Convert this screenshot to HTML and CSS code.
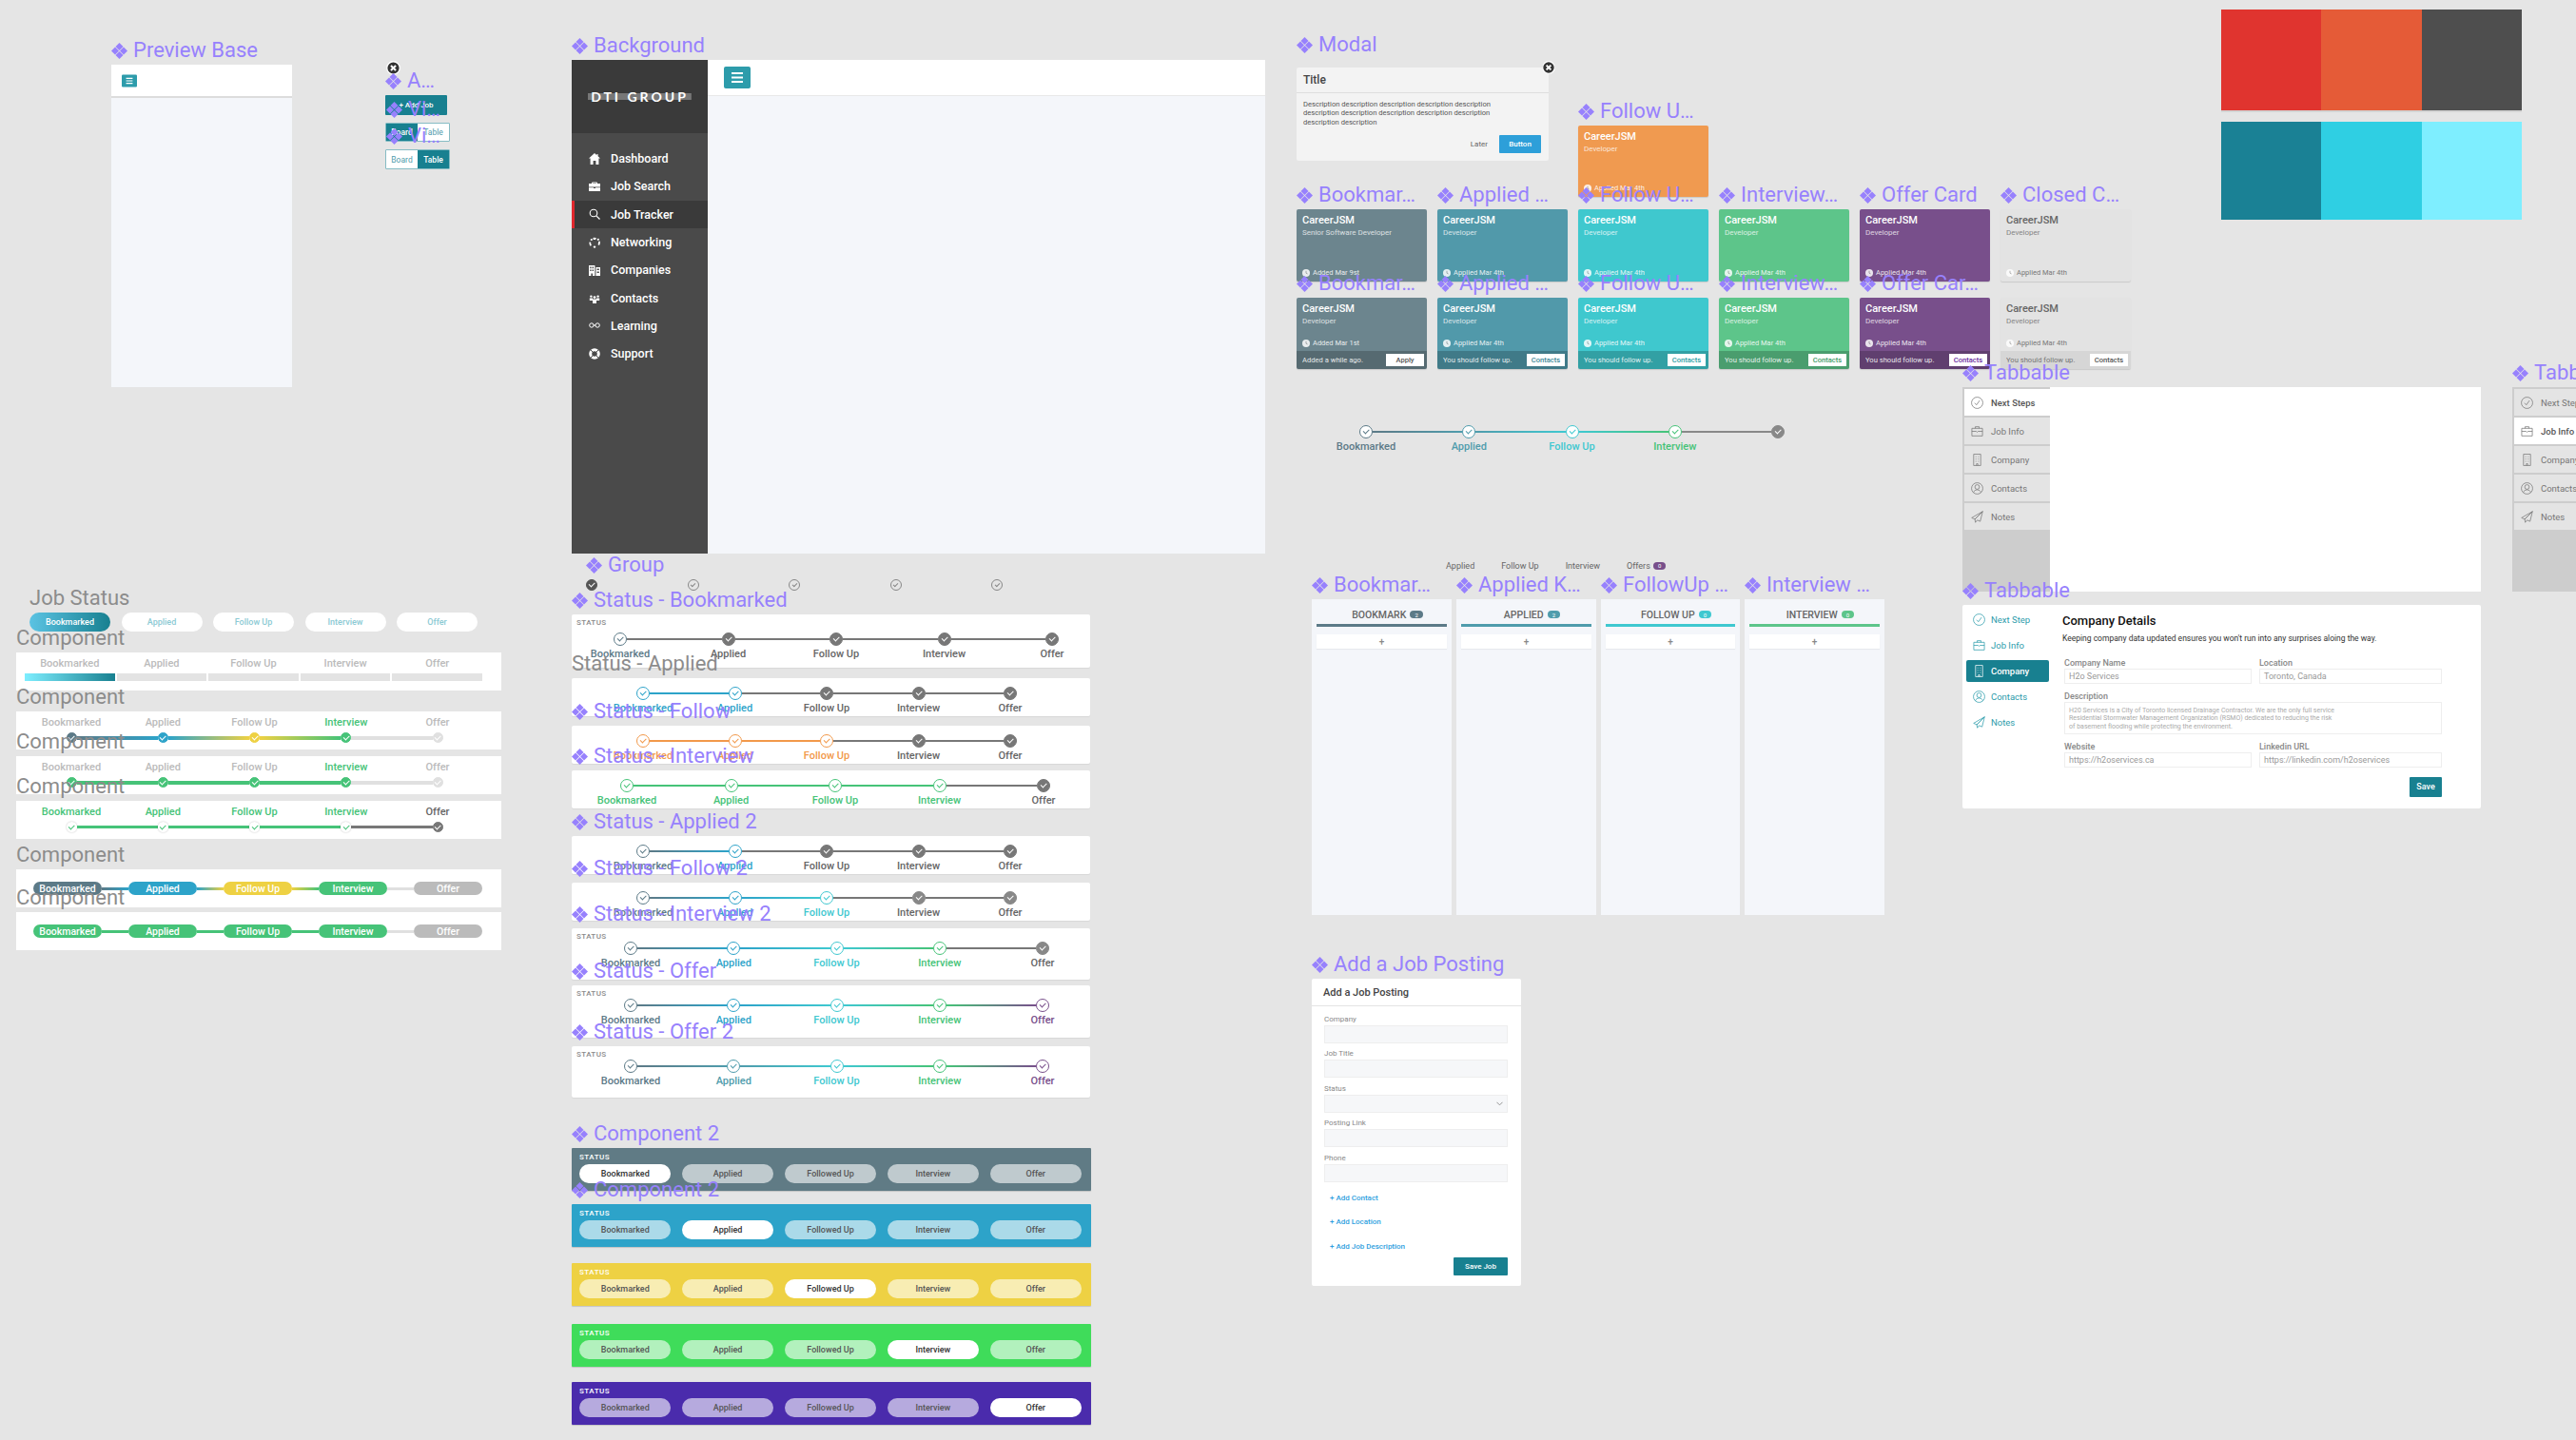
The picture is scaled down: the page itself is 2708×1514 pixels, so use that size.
FILE: index.html
```html
<!DOCTYPE html>
<html lang="en">
<head>
  <meta charset="UTF-8" />
  <title>Job Tracker components</title>
  <link rel="stylesheet" href="styles.css">
</head>
<body>

<svg class="sprite" xmlns="http://www.w3.org/2000/svg">
  <symbol id="i-burger" viewBox="0 0 28 23"><rect width="28" height="23" rx="2" fill="#2d9cab"/><path d="M8 7h12M8 11.5h12M8 16h12" stroke="#fff" stroke-width="2"/></symbol>
  <symbol id="i-x" viewBox="0 0 14 14"><circle cx="7" cy="7" r="6.3" fill="#333" stroke="#fff" stroke-width="1.2"/><path d="M4.6 4.6l4.8 4.8M9.4 4.6l-4.8 4.8" stroke="#fff" stroke-width="1.9"/></symbol>
  <symbol id="i-clock" viewBox="0 0 10 10"><circle cx="5" cy="5" r="5" fill="currentColor"/><path d="M5 2.2v3l2 1" fill="none" stroke="#0006" stroke-width="1"/></symbol>
  <symbol id="i-home" viewBox="0 0 12 12"><path d="M6 0l2.4 2.2V1h1.2v2.3L12 5.6h-1.6V12H7.4V8H4.6v4H1.6V5.6H0z" fill="currentColor"/></symbol>
  <symbol id="i-case" viewBox="0 0 12 12"><path d="M4 1.5h4a1 1 0 0 1 1 1V3h3v3.4H0V3h3v-.5a1 1 0 0 1 1-1zM4.2 2.6V3h3.6v-.4zM0 7.2h5V8h2v-.8h5V11H0z" fill="currentColor"/></symbol>
  <symbol id="i-find" viewBox="0 0 12 12"><circle cx="5" cy="5" r="3.8" fill="none" stroke="currentColor" stroke-width="1.1"/><path d="M7.8 7.8L11.5 11.5" stroke="currentColor" stroke-width="1.2"/></symbol>
  <symbol id="i-net" viewBox="0 0 12 12"><path d="M4.4 1a5 5 0 0 1 3.6.3L7 3.1a3 3 0 0 0-2.2 0zM10 5l1.6-.6A5.5 5.5 0 0 1 11 9l-1.5-1a3.6 3.6 0 0 0 .5-3zM3 8.7l-1.4 1A5.5 5.5 0 0 1 .5 5.5l1.7.3A3.6 3.6 0 0 0 3 8.7z" fill="currentColor"/><circle cx="2.8" cy="3" r="1.1" fill="currentColor"/><circle cx="9.8" cy="2.8" r="1.1" fill="currentColor"/><circle cx="6" cy="10.6" r="1.2" fill="currentColor"/></symbol>
  <symbol id="i-corp" viewBox="0 0 12 12"><path d="M0 1h6.4v11H4V9.5H2.4V12H0zM1.2 2.6v1.6h1.4V2.6zm2.4 0v1.6H5V2.6zM1.2 5.4V7h1.4V5.4zm2.4 0V7H5V5.4zM7.4 3H12v9H7.4zm1.2 1.6v1.5h2.2V4.6zm0 2.8v1.5h2.2V7.4z" fill="currentColor"/></symbol>
  <symbol id="i-team" viewBox="0 0 12 12"><circle cx="2.4" cy="4.6" r="1.2" fill="currentColor"/><circle cx="9.6" cy="4.6" r="1.2" fill="currentColor"/><circle cx="6" cy="5.6" r="1.4" fill="currentColor"/><path d="M.8 6.4h3.2v2.6H.8zM8 6.4h3.2v2.6H8zM4 7.6h4V12H4z" fill="currentColor"/></symbol>
  <symbol id="i-learn" viewBox="0 0 12 12"><circle cx="2.9" cy="6" r="2.2" fill="none" stroke="currentColor"/><circle cx="9.1" cy="6" r="2.2" fill="none" stroke="currentColor"/><path d="M5 6h2" stroke="currentColor"/></symbol>
  <symbol id="i-help" viewBox="0 0 12 12"><circle cx="6" cy="6" r="4.3" fill="none" stroke="currentColor" stroke-width="3"/><path d="M2 2l2 2M10 2L8 4M2 10l2-2M10 10L8 8" stroke="#4a4a4a"/></symbol>
  <symbol id="i-done" viewBox="0 0 14 14"><circle cx="7" cy="7" r="6.4" fill="none" stroke="currentColor" stroke-width=".8"/><path d="M4.2 7.2l2 2.2 3.6-5" fill="none" stroke="currentColor" stroke-width=".8"/></symbol>
  <symbol id="i-job" viewBox="0 0 14 14"><path d="M1 3.6h12v8.6H1zM4.8 3.6V1.8h4.4v1.8M1 7h5l1 1 1-1h5" fill="none" stroke="currentColor" stroke-width=".8"/></symbol>
  <symbol id="i-firm" viewBox="0 0 14 14"><path d="M3 .6h8v12.8H3zM5.6 3v1M8.4 3v1M5.6 5.6v1M8.4 5.6v1M5.6 8.2v1M8.4 8.2v1M6.2 13.4v-2h1.6v2" fill="none" stroke="currentColor" stroke-width=".8"/></symbol>
  <symbol id="i-person" viewBox="0 0 14 14"><circle cx="7" cy="7" r="6.4" fill="none" stroke="currentColor" stroke-width=".8"/><circle cx="7" cy="5.4" r="2.6" fill="none" stroke="currentColor" stroke-width=".8"/><path d="M2.8 11.6c.6-2 2.2-3 4.2-3s3.6 1 4.2 3" fill="none" stroke="currentColor" stroke-width=".8"/></symbol>
  <symbol id="i-send" viewBox="0 0 14 14"><path d="M13.2.8L.8 8l3.6 1.6zM13.2.8L4.4 9.6l.6 3.6 2-2.6 3.4 1.4z" fill="none" stroke="currentColor" stroke-width=".8"/></symbol>
</svg>

<main class="canvas">

  <!-- shells -->
  <section class="frame at-preview shell">
    <div class="label comp">Preview Base</div>
    <header class="preview-top"><svg class="burger-sm"><use href="#i-burger"/></svg></header>
  </section>

  <svg class="frame at-close-a close-icon"><use href="#i-x"/></svg>

  <div class="frame at-addjob add-job">
    <div class="label comp">A…</div>
    + Add Job
  </div>
  <div class="frame at-view-a view-toggle">
    <div class="label comp">Vi…</div>
    <span class="view-on">Board</span><span class="view-off">Table</span>
  </div>
  <div class="frame at-view-b view-toggle">
    <div class="label comp">Vi…</div>
    <span class="view-off">Board</span><span class="view-on">Table</span>
  </div>

  <section class="frame at-bg app">
    <div class="label comp">Background</div>
    <aside class="side">
      <div class="side-logo"><span class="logo-text">DTI GROUP</span></div>
      <nav class="side-nav">
        <a class="side-link"><svg class="side-icon"><use href="#i-home"/></svg>Dashboard</a>
        <a class="side-link"><svg class="side-icon"><use href="#i-case"/></svg>Job Search</a>
        <a class="side-link active"><svg class="side-icon"><use href="#i-find"/></svg>Job Tracker</a>
        <a class="side-link"><svg class="side-icon"><use href="#i-net"/></svg>Networking</a>
        <a class="side-link"><svg class="side-icon"><use href="#i-corp"/></svg>Companies</a>
        <a class="side-link"><svg class="side-icon"><use href="#i-team"/></svg>Contacts</a>
        <a class="side-link"><svg class="side-icon"><use href="#i-learn"/></svg>Learning</a>
        <a class="side-link"><svg class="side-icon"><use href="#i-help"/></svg>Support</a>
      </nav>
    </aside>
    <div class="app-main">
      <header class="app-top"><svg class="burger"><use href="#i-burger"/></svg></header>
    </div>
  </section>

  <div class="frame at-group group-row">
    <div class="label comp">Group</div>
    <i class="node fill c-dark"></i><i class="node ghost"></i><i class="node ghost"></i><i class="node ghost"></i><i class="node ghost"></i>
  </div>

  <!-- status panels -->
  <section class="frame panel at-s1 pad-wide has-head">
    <div class="label comp">Status - Bookmarked</div>
    <div class="panel-head">STATUS</div>
    <div class="track"><i class="node c-slate"></i><i class="seg c-gray"></i><i class="node fill c-gray"></i><i class="seg c-gray"></i><i class="node fill c-gray"></i><i class="seg c-gray"></i><i class="node fill c-gray"></i><i class="seg c-gray"></i><i class="node fill c-gray"></i></div>
    <div class="names"><span class="c-slate">Bookmarked</span><span>Applied</span><span>Follow Up</span><span>Interview</span><span>Offer</span></div>
  </section>

  <section class="frame panel at-s2 pad-narrow">
    <div class="label plain">Status - Applied</div>
    <div class="track"><i class="node c-blue"></i><i class="seg c-blue"></i><i class="node c-blue"></i><i class="seg c-gray"></i><i class="node fill c-gray"></i><i class="seg c-gray"></i><i class="node fill c-gray"></i><i class="seg c-gray"></i><i class="node fill c-gray"></i></div>
    <div class="names"><span class="c-blue">Bookmarked</span><span class="c-blue">Applied</span><span>Follow Up</span><span>Interview</span><span>Offer</span></div>
  </section>

  <section class="frame panel at-s3 pad-narrow">
    <div class="label comp">Status - Follow</div>
    <div class="track"><i class="node c-orange"></i><i class="seg c-orange"></i><i class="node c-orange"></i><i class="seg c-orange"></i><i class="node c-orange"></i><i class="seg c-gray"></i><i class="node fill c-gray"></i><i class="seg c-gray"></i><i class="node fill c-gray"></i></div>
    <div class="names"><span class="c-orange">Bookmarked</span><span class="c-orange">Applied</span><span class="c-orange">Follow Up</span><span>Interview</span><span>Offer</span></div>
  </section>

  <section class="frame panel at-s4 pad-mid">
    <div class="label comp">Status - Interview</div>
    <div class="track"><i class="node c-green"></i><i class="seg c-green"></i><i class="node c-green"></i><i class="seg c-green"></i><i class="node c-green"></i><i class="seg c-green"></i><i class="node c-green"></i><i class="seg c-gray"></i><i class="node fill c-gray"></i></div>
    <div class="names"><span class="c-green">Bookmarked</span><span class="c-green">Applied</span><span class="c-green">Follow Up</span><span class="c-green">Interview</span><span>Offer</span></div>
  </section>

  <section class="frame panel at-s5 pad-narrow">
    <div class="label comp">Status - Applied 2</div>
    <div class="track"><i class="node c-slate"></i><i class="seg g-slate-blue"></i><i class="node c-blue"></i><i class="seg c-gray"></i><i class="node fill c-gray"></i><i class="seg c-gray"></i><i class="node fill c-gray"></i><i class="seg c-gray"></i><i class="node fill c-gray"></i></div>
    <div class="names"><span class="c-slate">Bookmarked</span><span class="c-blue">Applied</span><span>Follow Up</span><span>Interview</span><span>Offer</span></div>
  </section>

  <section class="frame panel at-s6 pad-narrow">
    <div class="label comp">Status - Follow 2</div>
    <div class="track"><i class="node c-slate"></i><i class="seg g-slate-blue"></i><i class="node c-blue"></i><i class="seg g-blue-cyan"></i><i class="node c-cyan"></i><i class="seg c-gray"></i><i class="node fill c-muted"></i><i class="seg c-gray"></i><i class="node fill c-muted"></i></div>
    <div class="names"><span class="c-slate">Bookmarked</span><span class="c-blue">Applied</span><span class="c-cyan">Follow Up</span><span>Interview</span><span>Offer</span></div>
  </section>

  <section class="frame panel at-s7 pad-end has-head">
    <div class="label comp">Status - Interview 2</div>
    <div class="panel-head">STATUS</div>
    <div class="track"><i class="node c-slate"></i><i class="seg g-slate-blue"></i><i class="node c-blue"></i><i class="seg g-blue-cyan"></i><i class="node c-cyan"></i><i class="seg g-cyan-green"></i><i class="node c-green"></i><i class="seg c-gray"></i><i class="node fill c-muted"></i></div>
    <div class="names"><span class="c-slate">Bookmarked</span><span class="c-blue">Applied</span><span class="c-cyan">Follow Up</span><span class="c-green">Interview</span><span>Offer</span></div>
  </section>

  <section class="frame panel at-s8 pad-end has-head">
    <div class="label comp">Status - Offer</div>
    <div class="panel-head">STATUS</div>
    <div class="track"><i class="node c-slate"></i><i class="seg g-slate-blue"></i><i class="node c-blue"></i><i class="seg g-blue-cyan"></i><i class="node c-cyan"></i><i class="seg g-cyan-green"></i><i class="node c-green"></i><i class="seg g-green-purple"></i><i class="node c-purple"></i></div>
    <div class="names"><span class="c-slate">Bookmarked</span><span class="c-blue">Applied</span><span class="c-cyan">Follow Up</span><span class="c-green">Interview</span><span class="c-purple">Offer</span></div>
  </section>

  <section class="frame panel at-s9 pad-end has-head">
    <div class="label comp">Status - Offer 2</div>
    <div class="panel-head">STATUS</div>
    <div class="track"><i class="node c-slate"></i><i class="seg g-slate-teal"></i><i class="node c-teal"></i><i class="seg g-teal-cyan"></i><i class="node c-cyan"></i><i class="seg g-cyan-green"></i><i class="node c-green"></i><i class="seg g-green-purple"></i><i class="node c-purple"></i></div>
    <div class="names"><span class="c-slate">Bookmarked</span><span class="c-teal">Applied</span><span class="c-cyan">Follow Up</span><span class="c-green">Interview</span><span class="c-purple">Offer</span></div>
  </section>

  <!-- status bars -->
  <section class="frame status-bar at-b1 bar-slate">
    <div class="label comp">Component 2</div>
    <div class="bar-title">STATUS</div>
    <div class="bar-pills"><span class="on">Bookmarked</span><span>Applied</span><span>Followed Up</span><span>Interview</span><span>Offer</span></div>
  </section>
  <section class="frame status-bar at-b2 bar-blue">
    <div class="label comp">Component 2</div>
    <div class="bar-title">STATUS</div>
    <div class="bar-pills"><span>Bookmarked</span><span class="on">Applied</span><span>Followed Up</span><span>Interview</span><span>Offer</span></div>
  </section>
  <section class="frame status-bar at-b3 bar-yellow">
    <div class="bar-title">STATUS</div>
    <div class="bar-pills"><span>Bookmarked</span><span>Applied</span><span class="on">Followed Up</span><span>Interview</span><span>Offer</span></div>
  </section>
  <section class="frame status-bar at-b4 bar-green">
    <div class="bar-title">STATUS</div>
    <div class="bar-pills"><span>Bookmarked</span><span>Applied</span><span>Followed Up</span><span class="on">Interview</span><span>Offer</span></div>
  </section>
  <section class="frame status-bar at-b5 bar-violet">
    <div class="bar-title">STATUS</div>
    <div class="bar-pills"><span>Bookmarked</span><span>Applied</span><span>Followed Up</span><span>Interview</span><span class="on">Offer</span></div>
  </section>

  <!-- left column -->
  <div class="frame at-js job-pills">
    <div class="label plain">Job Status</div>
    <span class="on">Bookmarked</span><span>Applied</span><span>Follow Up</span><span>Interview</span><span>Offer</span>
  </div>

  <section class="frame left-panel phases at-l1">
    <div class="label plain">Component</div>
    <div class="phase-names"><span class="c-dark">Bookmarked</span><span>Applied</span><span>Follow Up</span><span>Interview</span><span>Offer</span></div>
    <div class="phase-bars"><i class="first"></i><i></i><i></i><i></i><i></i></div>
  </section>

  <section class="frame left-panel small-steps at-l2">
    <div class="label plain">Component</div>
    <div class="names"><span class="c-soft">Bookmarked</span><span class="c-soft">Applied</span><span class="c-soft">Follow Up</span><span class="c-lgreen">Interview</span><span class="c-soft">Offer</span></div>
    <div class="track"><i class="node fill c-slate"></i><i class="seg g-slate-blue"></i><i class="node fill c-blue"></i><i class="seg g-blue-yellow"></i><i class="node fill c-yellow"></i><i class="seg g-yellow-green"></i><i class="node fill c-lgreen"></i><i class="seg c-pale"></i><i class="node fill c-pale"></i></div>
  </section>

  <section class="frame left-panel small-steps at-l3">
    <div class="label plain">Component</div>
    <div class="names"><span class="c-soft">Bookmarked</span><span class="c-soft">Applied</span><span class="c-soft">Follow Up</span><span class="c-lgreen">Interview</span><span class="c-soft">Offer</span></div>
    <div class="track"><i class="node fill c-lgreen"></i><i class="seg c-lgreen"></i><i class="node fill c-lgreen"></i><i class="seg c-lgreen"></i><i class="node fill c-lgreen"></i><i class="seg c-lgreen"></i><i class="node fill c-lgreen"></i><i class="seg c-pale"></i><i class="node fill c-pale"></i></div>
  </section>

  <section class="frame left-panel small-steps at-l4">
    <div class="label plain">Component</div>
    <div class="names"><span class="c-lgreen">Bookmarked</span><span class="c-lgreen">Applied</span><span class="c-lgreen">Follow Up</span><span class="c-lgreen">Interview</span><span>Offer</span></div>
    <div class="track thin"><i class="node bare c-lgreen"></i><i class="seg c-lgreen"></i><i class="node bare c-lgreen"></i><i class="seg c-lgreen"></i><i class="node bare c-lgreen"></i><i class="seg c-lgreen"></i><i class="node bare c-lgreen"></i><i class="seg c-gray"></i><i class="node fill c-gray"></i></div>
  </section>

  <section class="frame left-panel pill-steps at-l5">
    <div class="label plain">Component</div>
    <div class="pill-track"><span class="p-slate">Bookmarked</span><i class="seg g-slate-blue"></i><span class="p-blue">Applied</span><i class="seg g-blue-yellow"></i><span class="p-yellow">Follow Up</span><i class="seg g-yellow-green"></i><span class="p-green">Interview</span><i class="seg c-pale"></i><span class="p-grey">Offer</span></div>
  </section>

  <section class="frame left-panel pill-steps at-l6">
    <div class="label plain">Component</div>
    <div class="pill-track"><span class="p-green">Bookmarked</span><i class="seg c-lgreen"></i><span class="p-green">Applied</span><i class="seg c-lgreen"></i><span class="p-green">Follow Up</span><i class="seg c-lgreen"></i><span class="p-green">Interview</span><i class="seg c-pale"></i><span class="p-grey">Offer</span></div>
  </section>

  <!-- modal -->
  <section class="frame modal at-modal">
    <div class="label comp">Modal</div>
    <svg class="modal-close"><use href="#i-x"/></svg>
    <div class="modal-head">Title</div>
    <p class="modal-text">Description description description description description<br>description description description description description<br>description description</p>
    <div class="modal-actions"><span class="modal-later">Later</span><span class="modal-btn">Button</span></div>
  </section>

  <!-- job cards -->
  <article class="frame card card-orange at-orange">
    <div class="label comp">Follow U…</div>
    <div class="card-body"><b class="card-title">CareerJSM</b><span class="card-role">Developer</span><span class="card-meta"><svg class="clock"><use href="#i-clock"/></svg>Applied Mar 4th</span></div>
  </article>

  <article class="frame card card-slate col-1 row-a">
    <div class="label comp">Bookmar…</div>
    <div class="card-body"><b class="card-title">CareerJSM</b><span class="card-role">Senior Software Developer</span><span class="card-meta"><svg class="clock"><use href="#i-clock"/></svg>Added Mar 9st</span></div>
  </article>
  <article class="frame card card-teal col-2 row-a">
    <div class="label comp">Applied …</div>
    <div class="card-body"><b class="card-title">CareerJSM</b><span class="card-role">Developer</span><span class="card-meta"><svg class="clock"><use href="#i-clock"/></svg>Applied Mar 4th</span></div>
  </article>
  <article class="frame card card-cyan col-3 row-a">
    <div class="label comp">Follow U…</div>
    <div class="card-body"><b class="card-title">CareerJSM</b><span class="card-role">Developer</span><span class="card-meta"><svg class="clock"><use href="#i-clock"/></svg>Applied Mar 4th</span></div>
  </article>
  <article class="frame card card-green col-4 row-a">
    <div class="label comp">Interview…</div>
    <div class="card-body"><b class="card-title">CareerJSM</b><span class="card-role">Developer</span><span class="card-meta"><svg class="clock"><use href="#i-clock"/></svg>Applied Mar 4th</span></div>
  </article>
  <article class="frame card card-purple col-5 row-a">
    <div class="label comp">Offer Card</div>
    <div class="card-body"><b class="card-title">CareerJSM</b><span class="card-role">Developer</span><span class="card-meta"><svg class="clock"><use href="#i-clock"/></svg>Applied Mar 4th</span></div>
  </article>
  <article class="frame card card-closed col-6 row-a">
    <div class="label comp">Closed C…</div>
    <div class="card-body"><b class="card-title">CareerJSM</b><span class="card-role">Developer</span><span class="card-meta"><svg class="clock"><use href="#i-clock"/></svg>Applied Mar 4th</span></div>
  </article>

  <article class="frame card card-slate col-1 row-b">
    <div class="label comp">Bookmar…</div>
    <div class="card-body"><b class="card-title">CareerJSM</b><span class="card-role">Developer</span><span class="card-meta"><svg class="clock"><use href="#i-clock"/></svg>Added Mar 1st</span></div>
    <div class="card-foot"><span>Added a while ago.</span><span class="card-btn">Apply</span></div>
  </article>
  <article class="frame card card-teal col-2 row-b">
    <div class="label comp">Applied …</div>
    <div class="card-body"><b class="card-title">CareerJSM</b><span class="card-role">Developer</span><span class="card-meta"><svg class="clock"><use href="#i-clock"/></svg>Applied Mar 4th</span></div>
    <div class="card-foot"><span>You should follow up.</span><span class="card-btn">Contacts</span></div>
  </article>
  <article class="frame card card-cyan col-3 row-b">
    <div class="label comp">Follow U…</div>
    <div class="card-body"><b class="card-title">CareerJSM</b><span class="card-role">Developer</span><span class="card-meta"><svg class="clock"><use href="#i-clock"/></svg>Applied Mar 4th</span></div>
    <div class="card-foot"><span>You should follow up.</span><span class="card-btn">Contacts</span></div>
  </article>
  <article class="frame card card-green col-4 row-b">
    <div class="label comp">Interview…</div>
    <div class="card-body"><b class="card-title">CareerJSM</b><span class="card-role">Developer</span><span class="card-meta"><svg class="clock"><use href="#i-clock"/></svg>Applied Mar 4th</span></div>
    <div class="card-foot"><span>You should follow up.</span><span class="card-btn">Contacts</span></div>
  </article>
  <article class="frame card card-purple col-5 row-b">
    <div class="label comp">Offer Car…</div>
    <div class="card-body"><b class="card-title">CareerJSM</b><span class="card-role">Developer</span><span class="card-meta"><svg class="clock"><use href="#i-clock"/></svg>Applied Mar 4th</span></div>
    <div class="card-foot"><span>You should follow up.</span><span class="card-btn">Contacts</span></div>
  </article>
  <article class="frame card card-closed col-6 row-b">
    <div class="card-body"><b class="card-title">CareerJSM</b><span class="card-role">Developer</span><span class="card-meta"><svg class="clock"><use href="#i-clock"/></svg>Applied Mar 4th</span></div>
    <div class="card-foot"><span>You should follow up.</span><span class="card-btn">Contacts</span></div>
  </article>

  <!-- loose stepper and kanban -->
  <div class="frame at-top-steps top-steps">
    <div class="track"><i class="node c-slate"></i><i class="seg g-slate-teal"></i><i class="node c-teal"></i><i class="seg g-teal-cyan"></i><i class="node c-cyan"></i><i class="seg g-cyan-green"></i><i class="node c-green"></i><i class="seg c-muted"></i><i class="node fill c-muted"></i></div>
    <div class="names"><span class="c-slate">Bookmarked</span><span class="c-teal">Applied</span><span class="c-cyan">Follow Up</span><span class="c-green">Interview</span><span></span></div>
  </div>

  <div class="frame at-kan-tabs kan-tabs"><span>Applied</span><span>Follow Up</span><span>Interview</span><span class="kan-offers">Offers <b class="kan-count bg-purple">0</b></span></div>

  <section class="frame kanban kan-1">
    <div class="label comp">Bookmar…</div>
    <div class="kan-head">BOOKMARK <b class="kan-count bg-slate">2</b></div>
    <div class="kan-rule bg-slate"></div>
    <div class="kan-add">+</div>
  </section>
  <section class="frame kanban kan-2">
    <div class="label comp">Applied K…</div>
    <div class="kan-head">APPLIED <b class="kan-count bg-teal">2</b></div>
    <div class="kan-rule bg-teal"></div>
    <div class="kan-add">+</div>
  </section>
  <section class="frame kanban kan-3">
    <div class="label comp">FollowUp …</div>
    <div class="kan-head">FOLLOW UP <b class="kan-count bg-cyan">0</b></div>
    <div class="kan-rule bg-cyan"></div>
    <div class="kan-add">+</div>
  </section>
  <section class="frame kanban kan-4">
    <div class="label comp">Interview …</div>
    <div class="kan-head">INTERVIEW <b class="kan-count bg-green">0</b></div>
    <div class="kan-rule bg-green"></div>
    <div class="kan-add">+</div>
  </section>

  <!-- add job -->
  <section class="frame job-form at-job-form">
    <div class="label comp">Add a Job Posting</div>
    <h3 class="job-title">Add a Job Posting</h3>
    <div class="job-fields">
      <div class="job-field"><span>Company</span><div class="job-input"></div></div>
      <div class="job-field"><span>Job Title</span><div class="job-input"></div></div>
      <div class="job-field"><span>Status</span><div class="job-input select"><svg class="chevron" viewBox="0 0 8 5"><path d="M.5.5L4 4 7.5.5" fill="none" stroke="#888"/></svg></div></div>
      <div class="job-field"><span>Posting Link</span><div class="job-input"></div></div>
      <div class="job-field"><span>Phone</span><div class="job-input"></div></div>
    </div>
    <div class="job-links"><a>+ Add Contact</a><a>+ Add Location</a><a>+ Add Job Description</a></div>
    <div class="job-save">Save Job</div>
  </section>

  <!-- swatches -->
  <div class="frame at-swatches swatches">
    <div class="swatch-row top"><i class="sw-red"></i><i class="sw-orange"></i><i class="sw-dark"></i></div>
    <div class="swatch-row bottom"><i class="sw-teal"></i><i class="sw-cyan"></i><i class="sw-ice"></i></div>
  </div>

  <!-- tabs -->
  <section class="frame tabs at-tab-a">
    <div class="label comp">Tabbable</div>
    <div class="tab-rail">
      <a class="tab on"><svg class="tab-icon"><use href="#i-done"/></svg>Next Steps</a>
      <a class="tab"><svg class="tab-icon"><use href="#i-job"/></svg>Job Info</a>
      <a class="tab"><svg class="tab-icon"><use href="#i-firm"/></svg>Company</a>
      <a class="tab"><svg class="tab-icon"><use href="#i-person"/></svg>Contacts</a>
      <a class="tab"><svg class="tab-icon"><use href="#i-send"/></svg>Notes</a>
    </div>
    <div class="tab-pane"></div>
  </section>

  <section class="frame tabs at-tab-b">
    <div class="label comp">Tabbable</div>
    <div class="tab-rail">
      <a class="tab"><svg class="tab-icon"><use href="#i-done"/></svg>Next Steps</a>
      <a class="tab on"><svg class="tab-icon"><use href="#i-job"/></svg>Job Info</a>
      <a class="tab"><svg class="tab-icon"><use href="#i-firm"/></svg>Company</a>
      <a class="tab"><svg class="tab-icon"><use href="#i-person"/></svg>Contacts</a>
      <a class="tab"><svg class="tab-icon"><use href="#i-send"/></svg>Notes</a>
    </div>
    <div class="tab-pane"></div>
  </section>

  <section class="frame details at-details">
    <div class="label comp">Tabbable</div>
    <nav class="details-nav">
      <a><svg class="tab-icon"><use href="#i-done"/></svg>Next Step</a>
      <a><svg class="tab-icon"><use href="#i-job"/></svg>Job Info</a>
      <a class="on"><svg class="tab-icon"><use href="#i-firm"/></svg>Company</a>
      <a><svg class="tab-icon"><use href="#i-person"/></svg>Contacts</a>
      <a><svg class="tab-icon"><use href="#i-send"/></svg>Notes</a>
    </nav>
    <div class="details-body">
      <h3>Company Details</h3>
      <p>Keeping company data updated ensures you won't run into any surprises aloing the way.</p>
      <div class="details-grid">
        <div class="field"><span>Company Name</span><div class="field-box">H2o Services</div></div>
        <div class="field"><span>Location</span><div class="field-box">Toronto, Canada</div></div>
        <div class="field wide"><span>Description</span><div class="field-box area">H20 Services is a City of Toronto licensed Drainage Contractor. We are the only full service<br>Residential Stormwater Management Organization (RSMO) dedicated to reducing the risk<br>of basement flooding while protecting the environment.</div></div>
        <div class="field"><span>Website</span><div class="field-box">https://h2oservices.ca</div></div>
        <div class="field"><span>Linkedin URL</span><div class="field-box">https://linkedin.com/h2oservices</div></div>
      </div>
      <div class="details-save">Save</div>
    </div>
  </section>

</main>
</body>
</html>
```

FILE: styles.css
```css
:root {
  --slate: #5c7a87;
  --blue: #2da3c9;
  --teal: #4f9cac;
  --cyan: #3fc8d0;
  --green: #46c378;
  --yellow: #eed143;
  --orange: #f2994a;
  --purple: #784f8b;
  --brand: #188090;
  --label: #9781fd;
}

body {
  margin: 0;
  background: #e5e5e5;
  font-family: Roboto, "Liberation Sans", sans-serif;
  color: #666;
}

.sprite {
  display: none;
}

.canvas {
  position: relative;
  width: 2708px;
  height: 1514px;
  overflow: hidden;
}

/* every artboard sits on the free canvas, its name floats above it */
.frame {
  position: absolute;
  box-sizing: border-box;
}

.label {
  position: absolute;
  left: 0;
  bottom: 100%;
  margin-bottom: 2px;
  z-index: 5;
  display: flex;
  align-items: center;
  gap: 6px;
  font-size: 22px;
  font-weight: 400;
  line-height: 26px;
  white-space: nowrap;
  color: var(--label);
}

.label.plain {
  color: #8c8c8c;
}

.label.comp::before {
  content: "";
  flex: none;
  width: 17px;
  height: 17px;
  margin-top: 1px;
  background: var(--label);
  clip-path: path("M8.5 0l4 4-4 4-4-4zM4 4.5l4 4-4 4-4-4zM13 4.5l4 4-4 4-4-4zM8.5 9l4 4-4 4-4-4z");
}

/* canvas positions */
.at-preview { left: 117px; top: 68px; width: 190px; height: 339px; }
.at-close-a { left: 406px; top: 64px; width: 15px; height: 15px; }
.at-addjob { left: 405px; top: 100px; width: 65px; height: 21px; }
.at-view-a { left: 405px; top: 129px; width: 68px; height: 20px; }
.at-view-b { left: 405px; top: 157px; width: 68px; height: 21px; }
.at-bg { left: 601px; top: 63px; width: 729px; height: 519px; }
.at-group { left: 616px; top: 609px; width: 438px; height: 12px; }

.at-s1 { left: 601px; top: 646px; height: 56px; }
.at-s2 { left: 601px; top: 713px; height: 40px; }
.at-s3 { left: 601px; top: 763px; height: 40px; }
.at-s4 { left: 601px; top: 810px; height: 40px; }
.at-s5 { left: 601px; top: 879px; height: 40px; }
.at-s6 { left: 601px; top: 928px; height: 40px; }
.at-s7 { left: 601px; top: 976px; height: 54px; }
.at-s8 { left: 601px; top: 1036px; height: 55px; }
.at-s9 { left: 601px; top: 1100px; height: 54px; }

.at-b1 { top: 1207px; }
.at-b2 { top: 1266px; }
.at-b3 { top: 1328px; }
.at-b4 { top: 1392px; }
.at-b5 { top: 1453px; }

.at-js { left: 31px; top: 644px; width: 471px; height: 20px; }
.at-l1 { top: 686px; }
.at-l2 { top: 748px; }
.at-l3 { top: 795px; }
.at-l4 { top: 842px; }
.at-l5 { top: 914px; }
.at-l6 { top: 959px; }

.at-modal { left: 1363px; top: 71px; width: 265px; height: 98px; }
.at-orange { left: 1659px; top: 132px; height: 75px; }
.at-top-steps { left: 1429px; top: 447px; width: 447px; }
.at-kan-tabs { left: 1520px; top: 589px; }
.at-job-form { left: 1379px; top: 1029px; width: 220px; height: 323px; }
.at-swatches { left: 2335px; top: 10px; width: 316px; height: 221px; }
.at-tab-a { left: 2063px; top: 407px; }
.at-tab-b { left: 2641px; top: 407px; }
.at-details { left: 2063px; top: 636px; width: 545px; height: 214px; }

/* preview + app shell */
.shell {
  background: #f4f6fa;
}

.preview-top {
  height: 35px;
  box-sizing: border-box;
  padding: 10px 11px;
  background: #fff;
  border-bottom: 2px solid #dcdcdc;
}

.burger-sm {
  display: block;
  width: 16px;
  height: 14px;
}

.close-icon {
  overflow: visible;
}

.add-job {
  display: flex;
  align-items: center;
  justify-content: center;
  background: var(--brand);
  border-radius: 1px;
  font-size: 8px;
  font-weight: 500;
  color: #fff;
}

.view-toggle {
  display: flex;
  border: 1px solid #86bcc4;
  border-radius: 1px;
  background: #fff;
  font-size: 8.5px;
}

.view-toggle span {
  flex: 1;
  display: flex;
  align-items: center;
  justify-content: center;
}

.view-on {
  background: var(--brand);
  color: #fff;
  font-weight: 500;
}

.view-off {
  color: #4f9cac;
}

.app {
  display: flex;
}

.side {
  width: 143px;
  background: #4a4a4a;
}

.side-logo {
  height: 77px;
  display: flex;
  align-items: center;
  justify-content: center;
  background: #3a3a3a;
}

.logo-text {
  padding: 0 3px;
  background: linear-gradient(#777, #777) center / 100% 7px no-repeat;
  font-family: Lato, sans-serif;
  font-size: 14px;
  font-weight: 700;
  letter-spacing: 3px;
  color: #fff;
}

.side-nav {
  padding-top: 12px;
}

.side-link {
  display: flex;
  align-items: center;
  gap: 11px;
  height: 29.3px;
  padding-left: 18px;
  font-size: 12.5px;
  font-weight: 500;
  color: #fff;
}

.side-link.active {
  padding-left: 15px;
  border-left: 3px solid #e0282e;
  background: #3a3a3a;
}

.side-icon {
  flex: none;
  width: 12px;
  height: 12px;
  color: #fff;
}

.app-main {
  flex: 1;
  background: #f4f6fa;
}

.app-top {
  height: 38px;
  box-sizing: border-box;
  padding-top: 7px;
  padding-left: 17px;
  background: #fff;
  border-bottom: 1px solid #e8e8e8;
}

.burger {
  display: block;
  width: 28px;
  height: 23px;
}

.group-row {
  display: flex;
  justify-content: space-between;
  --node: 12px;
}

/* status steppers */
.panel {
  width: 545px;
  padding-top: 9px;
  background: #fff;
  border-radius: 2px;
  box-shadow: 0 1px 1px rgba(0, 0, 0, 0.06);
}

.panel.has-head {
  padding-top: 4px;
}

.panel-head {
  height: 10px;
  font-size: 8px;
  font-weight: 500;
  line-height: 10px;
  letter-spacing: 0.4px;
  color: #8a8a8a;
}

.pad-wide { padding-left: 44px; padding-right: 33px; }
.pad-wide .panel-head { margin-left: -39px; margin-bottom: 5px; }
.pad-narrow { padding-left: 68px; padding-right: 77px; }
.pad-mid { padding-left: 51px; padding-right: 42px; }
.pad-end { padding-left: 55px; padding-right: 43px; }
.pad-end .panel-head { margin-left: -50px; }

.track {
  display: flex;
  align-items: center;
}

.seg {
  flex: 1;
  height: 2.5px;
  background: currentColor;
}

.node {
  flex: none;
  display: flex;
  align-items: center;
  justify-content: center;
  box-sizing: border-box;
  width: var(--node, 14px);
  height: var(--node, 14px);
  border: 1.5px solid currentColor;
  border-radius: 50%;
  background: #fff;
}

.node::after {
  content: "";
  width: 5px;
  height: 2.5px;
  border: solid currentColor;
  border-width: 0 0 1.5px 1.5px;
  transform: translateY(-1px) rotate(-45deg);
}

.node.fill {
  background: currentColor;
}

.node.fill::after {
  border-color: #fff;
}

.node.ghost {
  border: 1px solid #888;
  background: transparent;
  color: #888;
}

.node.ghost::after {
  width: 4px;
  height: 2px;
  border-width: 0 0 1px 1px;
}

.node.bare {
  border: 0;
  box-shadow: 0 0 2px rgba(0, 0, 0, 0.25);
}

.names {
  display: flex;
  justify-content: space-between;
  margin-top: 2px;
  font-size: 11px;
  font-weight: 500;
  line-height: 14px;
}

.names span {
  display: flex;
  justify-content: center;
  width: var(--node, 14px);
  white-space: nowrap;
}

.c-slate { color: var(--slate); }
.c-blue { color: var(--blue); }
.c-teal { color: var(--teal); }
.c-cyan { color: var(--cyan); }
.c-green { color: var(--green); }
.c-lgreen { color: #46c378; }
.c-orange { color: var(--orange); }
.c-purple { color: var(--purple); }
.c-yellow { color: var(--yellow); }
.c-gray { color: #777; }
.c-muted { color: #888; }
.c-dark { color: #555; }
.c-soft { color: #bbb; }
.c-pale { color: #e0e0e0; }

.g-slate-blue { background: linear-gradient(90deg, var(--slate), var(--blue)); }
.g-slate-teal { background: linear-gradient(90deg, var(--slate), var(--teal)); }
.g-blue-cyan { background: linear-gradient(90deg, var(--blue), var(--cyan)); }
.g-teal-cyan { background: linear-gradient(90deg, var(--teal), var(--cyan)); }
.g-cyan-green { background: linear-gradient(90deg, var(--cyan), var(--green)); }
.g-green-purple { background: linear-gradient(90deg, var(--green), var(--purple)); }
.g-blue-yellow { background: linear-gradient(90deg, var(--blue), var(--yellow)); }
.g-yellow-green { background: linear-gradient(90deg, var(--yellow), var(--green)); }

/* coloured status bars */
.status-bar {
  left: 601px;
  width: 546px;
  height: 45px;
  padding: 5px 10px 0 8px;
  border-radius: 1px;
  box-shadow: 0 1px 1px rgba(0, 0, 0, 0.15);
}

.bar-slate { background: #607b85; }
.bar-blue { background: var(--blue); }
.bar-yellow { background: var(--yellow); }
.bar-green { background: #3fdc5a; }
.bar-violet { background: #4a2bac; }

.bar-title {
  height: 12px;
  font-size: 8px;
  font-weight: 500;
  line-height: 10px;
  letter-spacing: 0.5px;
  color: #fff;
}

.bar-pills {
  display: flex;
  gap: 11.4px;
}

.bar-pills span {
  flex: 1;
  display: flex;
  align-items: center;
  justify-content: center;
  height: 20px;
  border-radius: 10px;
  background: rgba(255, 255, 255, 0.6);
  font-size: 9px;
  font-weight: 500;
  color: #555;
}

.bar-pills .on {
  background: #fff;
  color: #333;
}

/* left column */
.job-pills {
  display: flex;
  justify-content: space-between;
}

.job-pills span {
  display: flex;
  align-items: center;
  justify-content: center;
  width: 85px;
  border-radius: 10px;
  background: #fff;
  font-size: 9px;
  font-weight: 500;
  color: #8ccad4;
}

.job-pills .on {
  background: linear-gradient(90deg, #5bc3e3, var(--brand));
  color: #fff;
}

.left-panel {
  left: 17px;
  width: 510px;
  height: 40px;
  padding: 5px 61.5px 0 52.5px;
  background: #fff;
}

.left-panel.phases {
  padding: 5px 20px 0 9px;
}

.phase-names,
.phase-bars {
  display: grid;
  grid-template-columns: repeat(5, 1fr);
  column-gap: 2px;
}

.phase-names span {
  font-size: 11px;
  font-weight: 500;
  line-height: 14px;
  text-align: center;
  color: #bbb;
}

.phase-bars {
  margin-top: 3px;
}

.phase-bars i {
  height: 8px;
  background: #e3e3e3;
}

.phase-bars .first {
  background: linear-gradient(90deg, #7eeeff, var(--brand));
}

.small-steps {
  --node: 11px;
}

.small-steps .names {
  margin-top: 0;
  margin-bottom: 3px;
}

.small-steps .seg {
  height: 4px;
}

.small-steps .thin .seg {
  height: 2.5px;
}

.left-panel.pill-steps {
  padding: 13px 20px 0 18px;
}

.pill-track {
  display: flex;
  align-items: center;
}

.pill-track span {
  flex: none;
  display: flex;
  align-items: center;
  justify-content: center;
  width: 72px;
  height: 14px;
  border-radius: 7px;
  font-size: 10.5px;
  font-weight: 500;
  color: #fff;
}

.pill-track .seg {
  height: 3px;
}

.p-slate { background: var(--slate); }
.p-blue { background: var(--blue); }
.p-yellow { background: var(--yellow); }
.p-green { background: var(--green); }
.p-grey { background: #bbb; }

/* modal */
.modal {
  background: #f3f3f3;
  border-radius: 2px;
}

.modal .label {
  margin-bottom: 11px;
}

.modal-close {
  position: absolute;
  top: -7px;
  right: -7px;
  width: 14px;
  height: 14px;
}

.modal-head {
  padding-left: 7px;
  border-bottom: 1px solid #ddd;
  font-size: 12px;
  font-weight: 500;
  line-height: 26px;
  color: #444;
}

.modal-text {
  margin: 7px 7px 0;
  font-size: 7.6px;
  line-height: 9.4px;
  color: #555;
}

.modal-actions {
  display: flex;
  align-items: center;
  justify-content: flex-end;
  gap: 12px;
  margin: 9px 8px 0 0;
}

.modal-later {
  font-size: 8px;
  color: #666;
}

.modal-btn {
  width: 44px;
  line-height: 19px;
  text-align: center;
  background: #2d9fd9;
  border-radius: 1px;
  font-size: 8px;
  font-weight: 500;
  color: #fff;
}

/* job cards */
.card {
  display: flex;
  flex-direction: column;
  width: 137px;
  border-radius: 2px;
  color: #fff;
  box-shadow: 0 1px 1px rgba(0, 0, 0, 0.12);
}

.col-1 { left: 1363px; }
.col-2 { left: 1511px; }
.col-3 { left: 1659px; }
.col-4 { left: 1807px; }
.col-5 { left: 1955px; }
.col-6 { left: 2103px; }
.row-a { top: 220px; height: 76px; }
.row-b { top: 313px; height: 75px; }

.card-slate { background: #6c858e; }
.card-teal { background: #5199aa; }
.card-cyan { background: #3fc8ce; }
.card-green { background: #5dc58a; }
.card-purple { background: #784f8b; }
.card-orange { background: #f09a50; }
.card-closed { background: #e3e3e3; color: #666; }

.card-body {
  flex: 1;
  display: flex;
  flex-direction: column;
  min-height: 0;
  padding: 5px 6px 5px;
}

.card-title {
  font-size: 11px;
  font-weight: 500;
  line-height: 13px;
}

.card-role {
  margin-top: 1px;
  font-size: 8px;
  line-height: 11px;
  opacity: 0.75;
}

.card-meta {
  display: flex;
  align-items: center;
  gap: 3px;
  margin-top: auto;
  font-size: 7.5px;
  line-height: 9px;
  opacity: 0.85;
}

.clock {
  width: 8px;
  height: 8px;
  color: #fff;
}

.row-b .card-body {
  padding-bottom: 4px;
}

.card-foot {
  display: flex;
  align-items: center;
  justify-content: space-between;
  height: 19px;
  padding: 0 3px 0 6px;
  background: rgba(0, 0, 0, 0.2);
  border-radius: 0 0 2px 2px;
  font-size: 7.6px;
}

.card-closed .card-foot {
  background: #d6d6d6;
}

.card-foot > span:first-child {
  opacity: 0.85;
}

.card-btn {
  width: 40px;
  line-height: 13px;
  text-align: center;
  background: #fff;
  font-weight: 500;
  color: #555;
}

.card-teal .card-btn { color: #3d8797; }
.card-cyan .card-btn { color: #2c9ea4; }
.card-green .card-btn { color: #3f9c68; }
.card-purple .card-btn { color: #6a2aa0; }

/* kanban */
.top-steps .names {
  margin-top: 2px;
}

.kan-tabs {
  display: flex;
  gap: 28px;
  font-size: 9px;
  line-height: 12px;
  color: #666;
}

.kan-offers {
  display: flex;
  align-items: center;
  gap: 3px;
}

.kan-count {
  display: inline-flex;
  align-items: center;
  justify-content: center;
  width: 13.5px;
  height: 8px;
  border-radius: 4px;
  font-size: 6px;
  font-weight: 400;
  color: #fff;
}

.bg-slate { background: var(--slate); }
.bg-teal { background: var(--teal); }
.bg-cyan { background: var(--cyan); }
.bg-green { background: #5dc58a; }
.bg-purple { background: var(--purple); }

.kanban {
  top: 630px;
  height: 332px;
  padding: 10px 5px 0;
  background: #f4f6fa;
}

.kan-1 { left: 1379px; width: 147px; }
.kan-2 { left: 1531px; width: 147px; }
.kan-3 { left: 1683px; width: 146px; }
.kan-4 { left: 1834px; width: 147px; }

.kan-head {
  display: flex;
  align-items: center;
  justify-content: center;
  gap: 4px;
  height: 12px;
  padding-left: 12px;
  font-size: 10.5px;
  font-weight: 500;
  color: #666;
}

.kan-rule {
  height: 3px;
  margin-top: 4px;
}

.kan-add {
  height: 15px;
  margin-top: 8px;
  background: #fff;
  font-size: 10px;
  font-weight: 500;
  line-height: 15px;
  text-align: center;
  color: #888;
  box-shadow: 0 1px 1px rgba(0, 0, 0, 0.05);
}

/* add job form */
.job-form {
  display: flex;
  flex-direction: column;
  background: #fff;
  border-radius: 2px;
}

.job-title {
  height: 28px;
  margin: 0;
  padding-left: 12px;
  border-bottom: 1px solid #e4e4e4;
  font-size: 11px;
  font-weight: 500;
  line-height: 30px;
  color: #444;
}

.job-fields {
  display: flex;
  flex-direction: column;
  gap: 6.4px;
  padding: 9px 14px 0 13px;
}

.job-field span {
  display: block;
  margin-bottom: 1px;
  font-size: 8px;
  line-height: 10px;
  color: #888;
}

.job-input {
  display: flex;
  align-items: center;
  justify-content: flex-end;
  box-sizing: border-box;
  height: 19px;
  padding-right: 4px;
  background: #f6f7f9;
  border: 1px solid #eee;
}

.chevron {
  width: 7px;
  height: 5px;
}

.job-links {
  display: flex;
  flex-direction: column;
  gap: 13.5px;
  padding: 11px 0 0 19px;
  font-size: 8px;
  font-weight: 500;
  line-height: 12px;
  color: #2f9fe0;
}

.job-save {
  align-self: flex-end;
  width: 57px;
  margin: 5px 14px 0 0;
  border-radius: 1px;
  background: var(--brand);
  font-size: 8px;
  font-weight: 500;
  line-height: 19px;
  text-align: center;
  color: #fff;
}

/* colour swatches */
.swatches {
  display: flex;
  flex-direction: column;
  gap: 10px;
}

.swatch-row {
  display: grid;
  grid-template-columns: repeat(3, 1fr);
}

.swatch-row.top {
  height: 108px;
  border-bottom: 2px solid #d4d4d4;
  box-sizing: border-box;
}

.swatch-row.bottom { height: 103px; }

.sw-red { background: #e0342f; }
.sw-orange { background: #e55b37; }
.sw-dark { background: #4e4e4e; }
.sw-teal { background: #1a8195; }
.sw-cyan { background: #2fcfe3; }
.sw-ice { background: #7eeeff; }

/* tabbable */
.tabs {
  display: flex;
  width: 545px;
  height: 215px;
  border-radius: 2px;
}

.tab-rail {
  display: flex;
  flex-direction: column;
  gap: 2px;
  width: 92px;
  padding: 2px 0 0 2px;
  box-sizing: border-box;
  background: #cdcdcd;
}

.tab {
  display: flex;
  align-items: center;
  gap: 8px;
  height: 28px;
  padding-left: 7px;
  background: #e4e4e4;
  font-size: 9.5px;
  color: #777;
}

.tab.on {
  background: #fff;
  font-weight: 500;
  color: #555;
}

.tab-icon {
  flex: none;
  width: 13px;
  height: 13px;
  color: #777;
}

.tab-pane {
  flex: 1;
  background: #fff;
}

.details {
  display: flex;
  background: #fff;
  border-radius: 2px;
}

.details-nav {
  display: flex;
  flex-direction: column;
  gap: 4px;
  width: 91px;
  padding: 4px 0 0 4px;
  box-sizing: border-box;
}

.details-nav a {
  display: flex;
  align-items: center;
  gap: 6px;
  height: 23px;
  padding-left: 7px;
  font-size: 9.5px;
  color: #2d9cab;
}

.details-nav a .tab-icon {
  color: #2d9cab;
}

.details-nav .on {
  border-radius: 2px;
  background: var(--brand);
  font-weight: 500;
  color: #fff;
}

.details-nav .on .tab-icon {
  color: #fff;
}

.details-body {
  width: 399px;
  margin-left: 14px;
  padding-top: 9px;
}

.details-body h3 {
  margin: 0;
  font-size: 13px;
  font-weight: 500;
  line-height: 16px;
  color: #111;
}

.details-body p {
  margin: 4px 0 0;
  font-size: 8.5px;
  line-height: 12px;
  color: #333;
}

.details-grid {
  display: grid;
  grid-template-columns: 197px 192px;
  gap: 8px;
  margin: 15px 0 0 2px;
}

.field.wide {
  grid-column: 1 / -1;
}

.field span {
  display: block;
  margin-bottom: 1px;
  font-size: 9px;
  font-weight: 500;
  line-height: 10px;
  color: #888;
}

.field-box {
  box-sizing: border-box;
  height: 16px;
  padding-left: 4px;
  border: 1px solid #eee;
  font-size: 9px;
  line-height: 14px;
  color: #999;
}

.field-box.area {
  height: 34px;
  padding-top: 4px;
  font-size: 7px;
  line-height: 8.3px;
  color: #aaa;
}

.details-save {
  width: 34px;
  margin: 10px 0 0 365px;
  border-radius: 1px;
  background: var(--brand);
  font-size: 9px;
  font-weight: 500;
  line-height: 21px;
  text-align: center;
  color: #fff;
}
```
